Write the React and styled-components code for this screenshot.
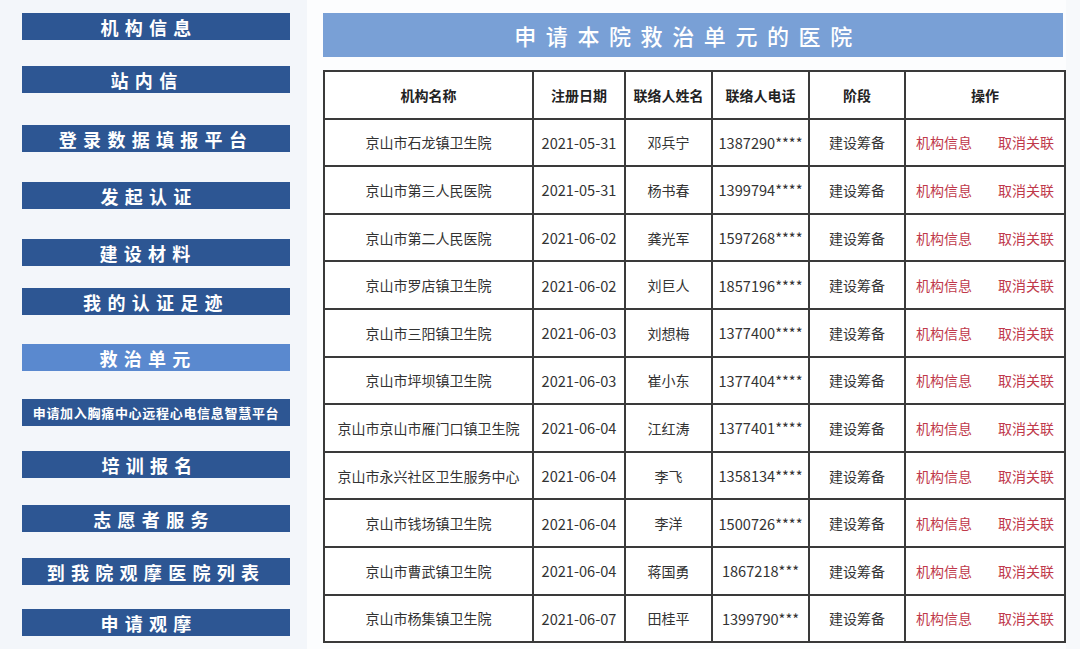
import React from 'react';
import styled, { createGlobalStyle } from 'styled-components';

const GlobalStyle = createGlobalStyle`
    html, body {
        margin: 0;
        padding: 0;
        background: #f7f9fb;
        font-family: "Noto Sans CJK SC", "Noto Sans", sans-serif;
    }
`

const Page = styled.div`
    display: flex;
    flex-direction: row;
    width: 1080px;
    height: 649px;
    overflow: hidden;
`

const Sidebar = styled.div`
    flex: 0 0 307px;
    display: flex;
    flex-direction: column;
    padding-left: 22px;
    box-sizing: border-box;
    background: #f3f6fa;
`

const NavItem = styled.div`
    width: 268px;
    height: 27px;
    margin-top: ${props => props.gap}px;
    display: flex;
    align-items: center;
    justify-content: center;
    background: ${props => props.active ? '#5a89cf' : '#2d5693'};
    color: #fff;
    font-weight: 700;
    font-size: ${props => props.small ? '13px' : '18px'};
    letter-spacing: ${props => props.small ? '0.7px' : '6.3px'};
    padding-right: ${props => props.shift || 0}px;
    box-sizing: border-box;
    white-space: nowrap;
`

const Main = styled.div`
    flex: 0 0 757px;
    padding-left: 16px;
    padding-top: 13px;
    box-sizing: border-box;
    background: #fcfdfe;
`

const TitleBar = styled.div`
    width: 740px;
    height: 44px;
    display: flex;
    align-items: center;
    justify-content: center;
    background: #79a0d6;
    color: #fff;
    font-size: 22px;
    font-weight: 500;
    letter-spacing: 9.6px;
    padding-right: 10px;
    box-sizing: border-box;
`

const Table = styled.table`
    margin-top: 13px;
    width: 741px;
    border-collapse: collapse;
    table-layout: fixed;
    background: #fff;
    border: 2px solid #333;
`

const Row = styled.tr`
    height: 47.6px;
`

const Th = styled.th`
    border: 2px solid #3a3a3a;
    font-size: 14px;
    font-weight: 700;
    color: #222;
    text-align: center;
    padding: 0;
`

const Td = styled.td`
    border: 2px solid #3a3a3a;
    font-size: 14px;
    color: #333;
    text-align: center;
    padding: 0;
    white-space: nowrap;
`

const Num = styled.span`
    font-size: 14.6px;
`

const Actions = styled.div`
    display: flex;
    justify-content: space-between;
    padding: 0 10px;
`

const Link = styled.span`
    color: #c0394b;
    font-size: 14px;
`

const NAV = [
    { label: '机构信息', gap: 13, shift: 14 },
    { label: '站内信', gap: 26, shift: 18 },
    { label: '登录数据填报平台', gap: 32 },
    { label: '发起认证', gap: 30, shift: 14 },
    { label: '建设材料', gap: 30, shift: 16 },
    { label: '我的认证足迹', gap: 22 },
    { label: '救治单元', gap: 29, active: true, shift: 16 },
    { label: '申请加入胸痛中心远程心电信息智慧平台', gap: 28, small: true },
    { label: '培训报名', gap: 25, shift: 12 },
    { label: '志愿者服务', gap: 27, shift: 4 },
    { label: '到我院观摩医院列表', gap: 26, shift: -12 },
    { label: '申请观摩', gap: 24, shift: 14 },
]

const COLS = [209, 92, 87, 97, 96, 160]
const HEAD = ['机构名称', '注册日期', '联络人姓名', '联络人电话', '阶段', '操作']

const ROWS = [
    ['京山市石龙镇卫生院', '2021-05-31', '邓兵宁', '1387290****'],
    ['京山市第三人民医院', '2021-05-31', '杨书春', '1399794****'],
    ['京山市第二人民医院', '2021-06-02', '龚光军', '1597268****'],
    ['京山市罗店镇卫生院', '2021-06-02', '刘巨人', '1857196****'],
    ['京山市三阳镇卫生院', '2021-06-03', '刘想梅', '1377400****'],
    ['京山市坪坝镇卫生院', '2021-06-03', '崔小东', '1377404****'],
    ['京山市京山市雁门口镇卫生院', '2021-06-04', '江红涛', '1377401****'],
    ['京山市永兴社区卫生服务中心', '2021-06-04', '李飞', '1358134****'],
    ['京山市钱场镇卫生院', '2021-06-04', '李洋', '1500726****'],
    ['京山市曹武镇卫生院', '2021-06-04', '蒋国勇', '1867218***'],
    ['京山市杨集镇卫生院', '2021-06-07', '田桂平', '1399790***'],
]

export default function App() {
    return (
        <Page>
            <GlobalStyle />
            <Sidebar>
                {NAV.map(item => (
                    <NavItem
                        key={item.label}
                        gap={item.gap}
                        active={item.active}
                        small={item.small}
                        shift={item.shift}>
                        {item.label}
                    </NavItem>
                ))}
            </Sidebar>
            <Main>
                <TitleBar>申请本院救治单元的医院</TitleBar>
                <Table>
                    <colgroup>
                        {COLS.map((w, i) => <col key={i} style={{ width: w }} />)}
                    </colgroup>
                    <thead>
                        <Row>
                            {HEAD.map(h => <Th key={h}>{h}</Th>)}
                        </Row>
                    </thead>
                    <tbody>
                        {ROWS.map(r => (
                            <Row key={r[0]}>
                                <Td>{r[0]}</Td>
                                <Td><Num>{r[1]}</Num></Td>
                                <Td>{r[2]}</Td>
                                <Td><Num>{r[3]}</Num></Td>
                                <Td>建设筹备</Td>
                                <Td>
                                    <Actions>
                                        <Link>机构信息</Link>
                                        <Link>取消关联</Link>
                                    </Actions>
                                </Td>
                            </Row>
                        ))}
                    </tbody>
                </Table>
            </Main>
        </Page>
    );
}
